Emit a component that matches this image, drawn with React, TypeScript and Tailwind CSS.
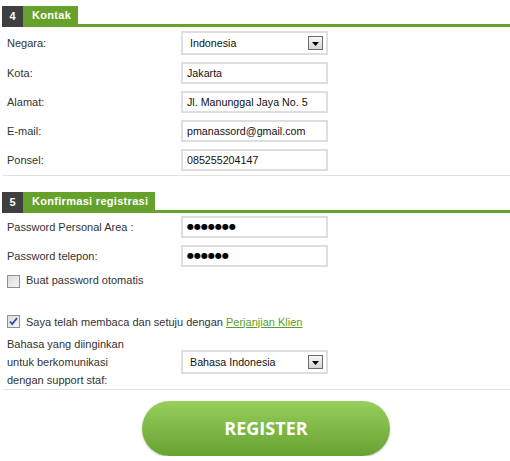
import type { ReactNode } from "react"

const font = { fontFamily: '"Liberation Sans", Arial, sans-serif' }

function SectionHeader({ num, title }: { num: string; title: string }) {
  return (
    <div className="flex h-[21px]">
      <div className="ml-[2px] flex h-[21px] w-[21px] items-center justify-center bg-[#3f3f3f] text-[11px] font-bold text-white">
        {num}
      </div>
      <div className="flex flex-1 flex-col">
        <div className="flex h-[18px] items-center self-start bg-[#66a22b] pl-[9px] pr-[7px] text-[11px] font-bold tracking-[0.3px] text-white">
          {title}
        </div>
        <div className="h-[3px] w-full bg-[#66a22b]" />
      </div>
    </div>
  )
}

function Row({ label, children }: { label: string; children: ReactNode }) {
  return (
    <div className="flex items-center">
      <div className="w-[181px] shrink-0 pl-[7px] text-[11px] text-[#333]">{label}</div>
      {children}
    </div>
  )
}

function TextBox({ value }: { value: string }) {
  return (
    <input
      readOnly
      value={value}
      className="h-[22px] w-[147px] border-2 border-[#dedede] bg-white pl-[4px] text-[10.7px] text-[#111] outline-none"
      style={font}
    />
  )
}

function Dots({ n }: { n: number }) {
  return (
    <div className="flex h-[22px] w-[147px] items-center border-2 border-[#dedede] bg-white pl-[4px]">
      <span
        className="text-[8px] leading-none text-black"
        style={{ fontFamily: '"DejaVu Sans", sans-serif' }}
      >
        {"●".repeat(n)}
      </span>
    </div>
  )
}

function Select({ value }: { value: string }) {
  return (
    <div className="flex h-[24px] w-[147px] items-center justify-between border-2 border-[#dedede] bg-white pl-[7px] pr-[3px]">
      <span className="text-[10.7px] text-[#111]">{value}</span>
      <span className="flex h-[14px] w-[15px] items-end justify-center border border-[#6b6b6b] bg-gradient-to-b from-[#f7f7f7] to-[#d6d6d6] pb-[3px]">
        <svg width="7" height="4" viewBox="0 0 7 4">
          <path d="M0 0h7L3.5 4z" fill="#000" />
        </svg>
      </span>
    </div>
  )
}

function CheckBox({ checked }: { checked?: boolean }) {
  return (
    <span className="flex h-[13px] w-[13px] shrink-0 items-center justify-center border border-[#8f8f8f] bg-gradient-to-br from-[#dcdcdc] to-[#f6f6f6]">
      {checked && (
        <svg width="9" height="9" viewBox="0 0 9 9">
          <path d="M1 4.5l2.2 2.6L8 1" fill="none" stroke="#2c4fa3" strokeWidth="1.8" />
        </svg>
      )}
    </span>
  )
}

export default function App() {
  return (
    <div className="w-[510px] bg-white pt-[6px]" style={font}>
      <SectionHeader num="4" title="Kontak" />

      <div className="mt-[4px] flex flex-col gap-[7px]">
        <Row label="Negara:">
          <Select value="Indonesia" />
        </Row>
        <Row label="Kota:">
          <TextBox value="Jakarta" />
        </Row>
        <Row label="Alamat:">
          <TextBox value="Jl. Manunggal Jaya No. 5" />
        </Row>
        <Row label="E-mail:">
          <TextBox value="pmanassord@gmail.com" />
        </Row>
        <Row label="Ponsel:">
          <TextBox value="085255204147" />
        </Row>
      </div>

      <div className="ml-[3px] mt-[4px] h-px bg-[#e3e3e3]" />

      <div className="mt-[16px]">
        <SectionHeader num="5" title="Konfirmasi registrasi" />
      </div>

      <div className="mt-[3px] flex flex-col gap-[7px]">
        <Row label="Password Personal Area :">
          <Dots n={7} />
        </Row>
        <Row label="Password telepon:">
          <Dots n={6} />
        </Row>
      </div>

      <label className="ml-[7px] mt-[8px] flex items-center gap-[6px] text-[11px] text-[#333]">
        <CheckBox />
        <span className="-mt-[3px]">Buat password otomatis</span>
      </label>

      <label className="ml-[7px] mt-[25px] flex items-center gap-[6px] text-[11px] text-[#333]">
        <CheckBox checked />
        <span>
          Saya telah membaca dan setuju dengan{" "}
          <a className="text-[#5a9e2a] underline">Perjanjian Klien</a>
        </span>
      </label>

      <div className="mt-[5px] flex items-center">
        <div className="w-[181px] shrink-0 pl-[7px] text-[11px] leading-[18px] text-[#333]">
          Bahasa yang diinginkan
          <br />
          untuk berkomunikasi
          <br />
          dengan support staf:
        </div>
        <Select value="Bahasa Indonesia" />
      </div>

      <div className="ml-[3px] h-px bg-[#e3e3e3]" />

      <button
        className="ml-[142px] mt-[11px] flex h-[55px] w-[248px] items-center justify-center rounded-full bg-gradient-to-b from-[#98cf5c] to-[#67a230] text-[18px] font-bold text-white shadow-[0_1px_2px_rgba(0,0,0,0.25)]"
        style={{ fontFamily: '"Open Sans", sans-serif' }}
      >
        REGISTER
      </button>
    </div>
  )
}
